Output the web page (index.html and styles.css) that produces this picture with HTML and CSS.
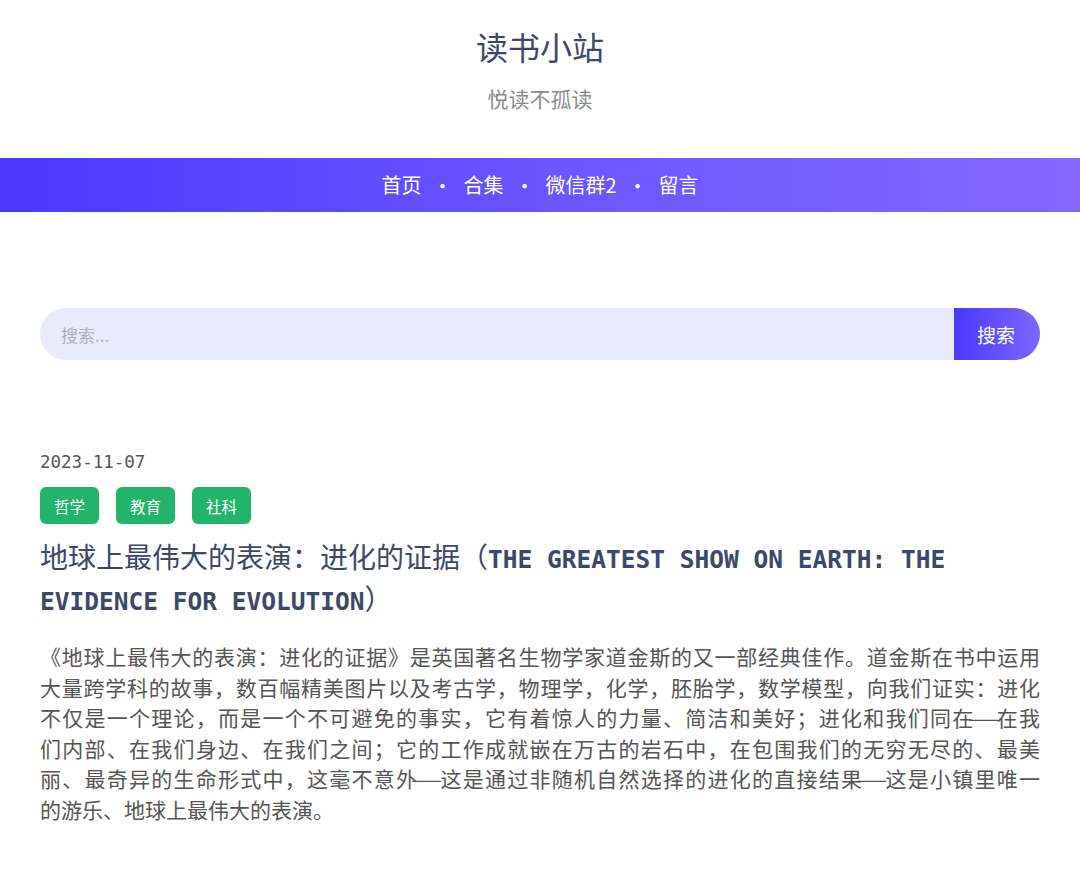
FILE: index.html
```html
<!DOCTYPE html>
<html lang="zh-CN">
<head>
<meta charset="utf-8">
<title>读书小站</title>
<link rel="stylesheet" href="styles.css">
</head>
<body>
<header class="site-header">
  <h1 class="site-title">读书小站</h1>
  <p class="site-subtitle">悦读不孤读</p>
</header>
<nav class="site-nav">
  <a class="nav-item" href="#">首页</a>
  <span class="nav-sep">·</span>
  <a class="nav-item" href="#">合集</a>
  <span class="nav-sep">·</span>
  <a class="nav-item" href="#">微信群2</a>
  <span class="nav-sep">·</span>
  <a class="nav-item" href="#">留言</a>
</nav>
<main class="content">
  <form class="search">
    <input class="search-input" type="text" placeholder="搜索...">
    <button class="search-btn" type="button">搜索</button>
  </form>
  <article class="post">
    <div class="post-date">2023-11-07</div>
    <div class="post-tags">
      <span class="tag">哲学</span>
      <span class="tag">教育</span>
      <span class="tag">社科</span>
    </div>
    <h2 class="post-title">地球上最伟大的表演：进化的证据（<span class="en">THE GREATEST SHOW ON EARTH: THE EVIDENCE FOR EVOLUTION</span>）</h2>
    <p class="post-excerpt">
      <span class="line">《地球上最伟大的表演：进化的证据》是英国著名生物学家道金斯的又一部经典佳作。道金斯在书中运用</span>
      <span class="line">大量跨学科的故事，数百幅精美图片以及考古学，物理学，化学，胚胎学，数学模型，向我们证实：进化</span>
      <span class="line">不仅是一个理论，而是一个不可避免的事实，它有着惊人的力量、简洁和美好；进化和我们同在<span class="dash">—</span>在我</span>
      <span class="line">们内部、在我们身边、在我们之间；它的工作成就嵌在万古的岩石中，在包围我们的无穷无尽的、最美</span>
      <span class="line">丽、最奇异的生命形式中，这毫不意外<span class="dash">—</span>这是通过非随机自然选择的进化的直接结果<span class="dash">—</span>这是小镇里唯一</span>
      <span class="line">的游乐、地球上最伟大的表演。</span>
    </p>
  </article>
</main>
</body>
</html>
```

FILE: styles.css
```css
* { box-sizing: border-box; }

body {
  margin: 0;
  background: #ffffff;
  font-family: "Noto Sans CJK SC", "Noto Sans", sans-serif;
  color: #555;
}

.site-header {
  text-align: center;
  padding: 24px 0 45px;
}

.site-title {
  margin: 0;
  font-size: 32px;
  line-height: 44px;
  font-weight: 400;
  color: #3d4866;
}

.site-subtitle {
  margin: 15px 0 0;
  font-size: 21px;
  line-height: 30px;
  color: #8a8a8a;
}

.site-nav {
  height: 54px;
  display: flex;
  align-items: center;
  justify-content: center;
  background: linear-gradient(90deg, #4a38ff 0%, #6a55ff 50%, #8468ff 100%);
}

.nav-item {
  color: #ffffff;
  text-decoration: none;
  font-size: 20px;
  line-height: 30px;
}

.nav-sep {
  width: 42px;
  text-align: center;
  color: #ffffff;
  font-size: 20px;
  font-weight: 400;
}

.content {
  padding: 96px 40px 0;
}

.search {
  display: flex;
  height: 52px;
  margin: 0;
}

.search-input {
  flex: 1;
  border: none;
  outline: none;
  background: #e9ebfc;
  border-radius: 26px 0 0 26px;
  padding: 0 21px;
  font-family: "Noto Sans CJK SC", sans-serif;
  font-size: 17px;
  color: #555;
}

.search-input::placeholder {
  color: #aeaeb6;
}

.search-btn {
  width: 86px;
  border: none;
  border-radius: 0 26px 26px 0;
  background: linear-gradient(90deg, #4a38ff, #7d66ff);
  color: #ffffff;
  font-family: "Noto Sans CJK SC", sans-serif;
  font-size: 19px;
  padding: 0 2px 0 0;
}

.post {
  margin-top: 90px;
}

.post-date {
  font-family: "DejaVu Sans Mono", monospace;
  font-size: 17.5px;
  line-height: 24px;
  color: #555;
}

.post-tags {
  display: flex;
  gap: 17px;
  margin-top: 13px;
}

.tag {
  height: 37px;
  width: 59px;
  display: flex;
  align-items: center;
  justify-content: center;
  background: #22b46b;
  color: #ffffff;
  border-radius: 6px;
  font-size: 15.5px;
}

.post-title {
  margin: 11px 0 0;
  font-size: 28px;
  line-height: 42px;
  font-weight: 400;
  color: #3d4866;
}

.post-title .en {
  font-family: "DejaVu Sans Mono", monospace;
  font-weight: 700;
  font-size: 24.5px;
  line-height: 1;
}

.post-excerpt {
  margin: 22px 0 0;
  font-size: 21px;
  line-height: 30.5px;
  color: #555555;
}

.post-excerpt .line {
  display: block;
  text-align: justify;
  text-align-last: justify;
}

.post-excerpt .line:last-child {
  text-align-last: left;
}

.post-excerpt .dash {
  display: inline-block;
  width: 1em;
  text-align: center;
  transform: scaleX(1.7);
}
```
